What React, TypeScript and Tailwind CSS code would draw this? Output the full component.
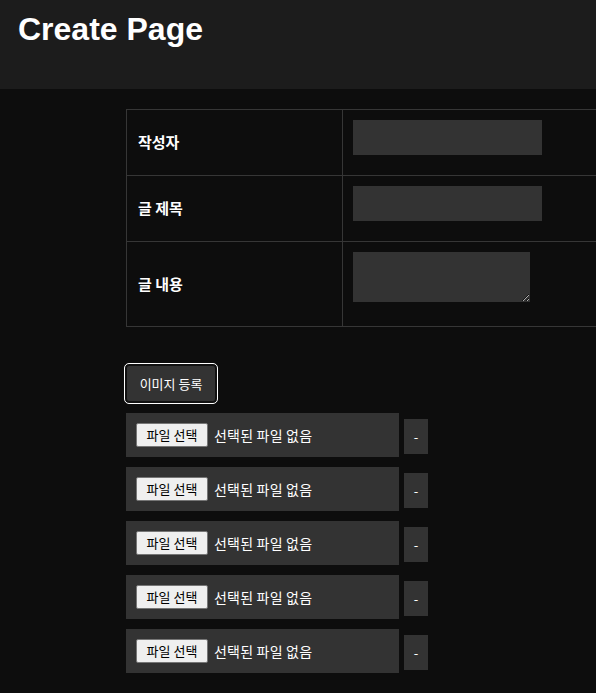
import React from "react";

const FileRow = () => (
  <div className="flex items-start gap-[5px]">
    <div className="flex h-[44px] w-[273px] items-center bg-[#333333] pl-[10px]">
      <span className="flex h-[24px] w-[72px] items-center justify-center rounded-[2px] border border-[#767676] bg-[#efefef] text-[13px] text-black">
        파일 선택
      </span>
      <span className="ml-[6px] text-[14px] tracking-[0.2px] text-white">선택된 파일 없음</span>
    </div>
    <div className="mt-[6px] flex h-[35px] w-[24px] items-center justify-center bg-[#333333] text-[13px] text-white">
      -
    </div>
  </div>
);

export default function App() {
  const font = { fontFamily: '"Malgun Gothic", "Noto Sans CJK KR", "Noto Sans", sans-serif' };
  return (
    <div className="min-h-[693px] w-full overflow-hidden bg-[#0d0d0d] text-white" style={font}>
      <div className="h-[89px] bg-[#1c1c1c] pl-[18px] pt-[11px]">
        <h1
          className="text-[32px] font-bold leading-[37px] text-white"
          style={{ fontFamily: '"Liberation Sans", Arial, sans-serif' }}
        >
          Create Page
        </h1>
      </div>

      <div className="ml-[126px] mt-[20px] w-[560px] border border-[#363636]">
        <div className="flex h-[66px] border-b border-[#363636]">
          <div className="flex w-[216px] items-center border-r border-[#363636] pl-[11px] text-[15px] font-bold">
            작성자
          </div>
          <div className="pl-[10px] pt-[10px]">
            <div className="h-[35px] w-[189px] bg-[#333333]" />
          </div>
        </div>
        <div className="flex h-[66px] border-b border-[#363636]">
          <div className="flex w-[216px] items-center border-r border-[#363636] pl-[11px] text-[15px] font-bold">
            글 제목
          </div>
          <div className="pl-[10px] pt-[10px]">
            <div className="h-[35px] w-[189px] bg-[#333333]" />
          </div>
        </div>
        <div className="flex h-[84px]">
          <div className="flex w-[216px] items-center border-r border-[#363636] pl-[11px] text-[15px] font-bold">
            글 내용
          </div>
          <div className="pl-[10px] pt-[10px]">
            <textarea className="block h-[50px] w-[177px] resize bg-[#333333] text-white outline-none" />
          </div>
        </div>
      </div>

      <div className="ml-[124px] mt-[36px]">
        <button className="flex h-[41px] w-[94px] items-center justify-center rounded-[5px] border border-white bg-[#333333] text-[13px] text-white shadow-[inset_0_0_0_2px_#111111]">
          이미지 등록
        </button>
      </div>

      <div className="ml-[126px] mt-[9px] flex flex-col gap-[10px]">
        <FileRow />
        <FileRow />
        <FileRow />
        <FileRow />
        <FileRow />
      </div>
    </div>
  );
}
